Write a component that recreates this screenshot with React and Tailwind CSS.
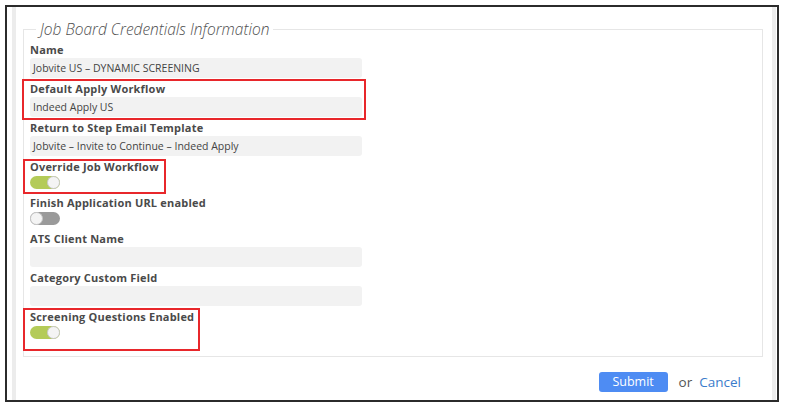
import React from "react";

const font = { fontFamily: '"Open Sans", "Liberation Sans", sans-serif' };

function Label({ children }) {
  return (
    <div className="text-[11px] font-bold leading-[16px] text-[#4a4a4a] tracking-[0.2px]">
      {children}
    </div>
  );
}

function TextField({ label, value }) {
  return (
    <div className="mb-[3px]">
      <Label>{label}</Label>
      <div className="h-[20px] w-[332px] rounded-[3px] bg-[#f2f2f2] pl-[3px] text-[10.5px] leading-[20px] text-[#444]">
        {value}
      </div>
    </div>
  );
}

function Toggle({ on }) {
  return (
    <div
      className={
        "relative mt-[1px] h-[13px] w-[30px] rounded-full " +
        (on ? "bg-[#b4cb58]" : "bg-[#9a9a9a]")
      }
    >
      <div
        className={
          "absolute top-0 h-[13px] w-[13px] rounded-full border border-[#c8c8c8] bg-[#f4f4f4] " +
          (on ? "right-0" : "left-0")
        }
      />
    </div>
  );
}

function ToggleField({ label, on }) {
  return (
    <div className="pb-[3px] mb-[3px]">
      <Label>{label}</Label>
      <Toggle on={on} />
    </div>
  );
}

export default function App() {
  return (
    <div className="bg-white w-[785px] h-[407px] pt-[5px] pl-[5px]" style={font}>
      <div className="flex w-[774px] h-[397px] border-2 border-[#2b2b2b] bg-white">
        <div className="ml-[5px] w-[4px] bg-[#ececec]" />
        <div className="flex flex-1 flex-col">
          <fieldset className="ml-[7px] mr-[9px] mt-[12px] border border-[#e6e6e6] pl-[6px] pb-[17px]">
            <legend className="ml-[6px] px-[4px] text-[15.5px] italic font-light leading-[20px] text-[#4f4f4f]">
              Job Board Credentials Information
            </legend>
            <div className="pt-[3px]">
              <TextField label="Name" value="Jobvite US – DYNAMIC SCREENING" />
              <div className="relative">
                <div className="pointer-events-none absolute -left-[8px] -top-[2px] border-2 border-[#e8272b] w-[344px] h-[41px]" />
                <TextField label="Default Apply Workflow" value="Indeed Apply US" />
              </div>
              <TextField
                label="Return to Step Email Template"
                value="Jobvite – Invite to Continue – Indeed Apply"
              />
              <div className="relative">
                <div className="pointer-events-none absolute left-[-7px] top-0 w-[143px] h-[35px] border-2 border-[#e8272b]" />
                <ToggleField label="Override Job Workflow" on />
              </div>
              <ToggleField label="Finish Application URL enabled" on={false} />
              <TextField label="ATS Client Name" value="" />
              <TextField label="Category Custom Field" value="" />
              <div className="relative">
                <div className="pointer-events-none absolute left-[-7px] top-[-1px] w-[177px] h-[43px] border-2 border-[#e8272b]" />
                <div>
                  <Label>Screening Questions Enabled</Label>
                  <Toggle on />
                </div>
              </div>
            </div>
          </fieldset>
          <div className="mt-[15px] flex items-center justify-end pr-[31px]">
            <button className="h-[20px] w-[69px] rounded-[3px] bg-[#4e8cf3] text-[12.5px] leading-[20px] text-white">
              Submit
            </button>
            <span className="ml-[11px] text-[13.5px] text-[#555]">or</span>
            <span className="ml-[7px] text-[13.5px] text-[#3b7ccb]">Cancel</span>
          </div>
        </div>
        <div className="ml-auto mr-[1px] w-[4px] bg-[#ececec]" />
      </div>
    </div>
  );
}
